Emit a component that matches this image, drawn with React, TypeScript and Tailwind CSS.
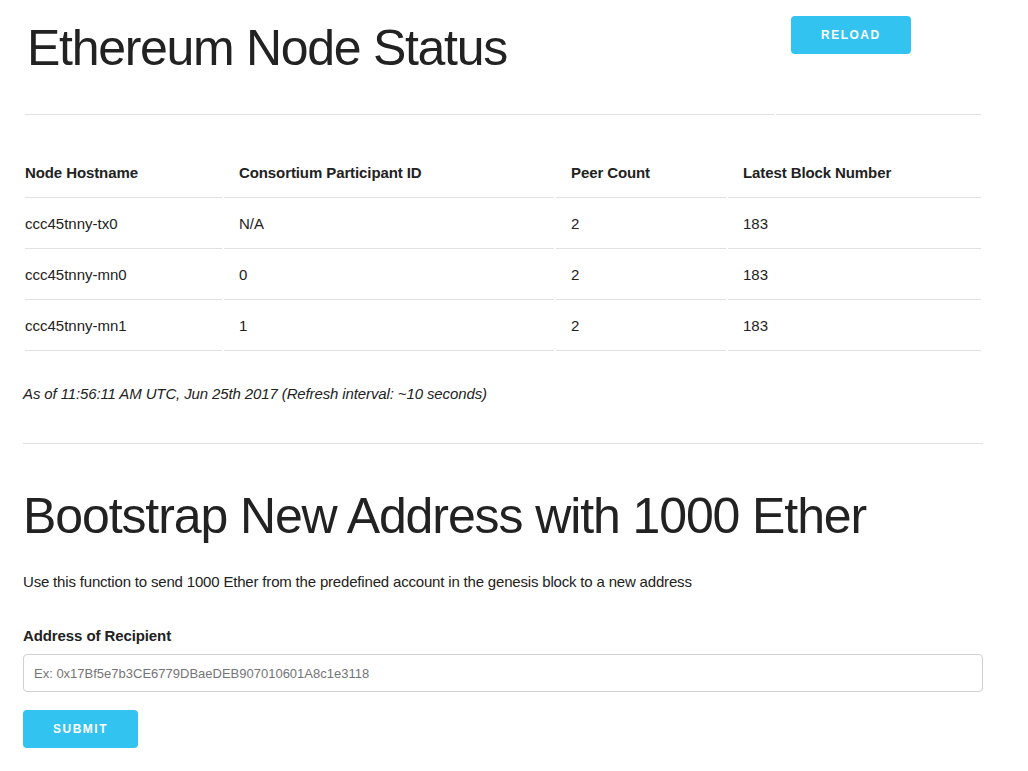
import React from 'react';

const nodes = [
  { host: 'ccc45tnny-tx0', id: 'N/A', peers: 2, block: 183 },
  { host: 'ccc45tnny-mn0', id: '0', peers: 2, block: 183 },
  { host: 'ccc45tnny-mn1', id: '1', peers: 2, block: 183 },
];

export default function App() {
  return (
    <div className="min-h-screen bg-white">
      <div className="ml-[23px] w-[960px] font-['Liberation_Sans',Arial,sans-serif] text-[15px] leading-[24px] text-[#222]">
        {/* header */}
        <table className="w-[960px] table-fixed border-separate border-spacing-[2px]">
          <tbody>
            <tr>
              <td className="w-[749px] border-b border-[#e1e1e1] pt-[16px] pb-[36px] pl-[2px] pr-[15px] align-top">
                <h1 className="h-[60px] text-[50px] leading-[60px] font-light tracking-[-1.3px] text-[#222]">
                  Ethereum Node Status
                </h1>
              </td>
              <td className="border-b border-[#e1e1e1] pt-[14px] pl-[15px] align-top">
                <button className="h-[38px] rounded-[4px] bg-[#33c3f0] px-[30px] text-[12px] font-bold uppercase leading-[38px] tracking-[1.5px] text-white">
                  Reload
                </button>
              </td>
            </tr>
          </tbody>
        </table>

        {/* node table */}
        <table className="mt-[30px] w-[960px] table-fixed border-separate border-spacing-[2px] text-left">
          <thead>
            <tr>
              <th className="w-[197px] border-b border-[#e1e1e1] py-[12px] pl-0 pr-[15px] font-bold tracking-[-0.1px]">Node Hostname</th>
              <th className="w-[330px] border-b border-[#e1e1e1] px-[15px] py-[12px] font-bold tracking-[-0.1px]">Consortium Participant ID</th>
              <th className="w-[170px] border-b border-[#e1e1e1] px-[15px] py-[12px] font-bold tracking-[-0.1px]">Peer Count</th>
              <th className="border-b border-[#e1e1e1] px-[15px] py-[12px] font-bold tracking-[-0.1px]">Latest Block Number</th>
            </tr>
          </thead>
          <tbody>
            {nodes.map((n) => (
              <tr key={n.host}>
                <td className="border-b border-[#e1e1e1] py-[12px] pl-0 pr-[15px]">{n.host}</td>
                <td className="border-b border-[#e1e1e1] px-[15px] py-[12px]">{n.id}</td>
                <td className="border-b border-[#e1e1e1] px-[15px] py-[12px]">{n.peers}</td>
                <td className="border-b border-[#e1e1e1] px-[15px] py-[12px]">{n.block}</td>
              </tr>
            ))}
          </tbody>
        </table>

        <p className="mt-[29px] italic tracking-[-0.12px]">
          As of 11:56:11 AM UTC, Jun 25th 2017 (Refresh interval: ~10 seconds)
        </p>

        <hr className="mt-[37px] border-t border-[#e1e1e1]" />

        {/* bootstrap */}
        <h1 className="mt-[42px] text-[50px] leading-[60px] font-light tracking-[-1.1px] text-[#222]">
          Bootstrap New Address with 1000 Ether
        </h1>
        <p className="mt-[24px] tracking-[-0.18px]">
          Use this function to send 1000 Ether from the predefined account in the genesis block to a new address
        </p>

        <label className="mt-[30px] block font-bold tracking-[-0.1px]">Address of Recipient</label>
        <input
          type="text"
          placeholder="Ex: 0x17Bf5e7b3CE6779DBaeDEB907010601A8c1e3118"
          className="mt-[6px] block h-[38px] w-[960px] rounded-[4px] border border-[#d1d1d1] bg-white px-[10px] py-[6px] text-[13px] placeholder:text-[#757575] outline-none"
        />
        <button className="mt-[18px] h-[38px] rounded-[4px] bg-[#33c3f0] px-[30px] text-[12px] font-bold uppercase leading-[38px] tracking-[1.5px] text-white">
          Submit
        </button>
      </div>
    </div>
  );
}
